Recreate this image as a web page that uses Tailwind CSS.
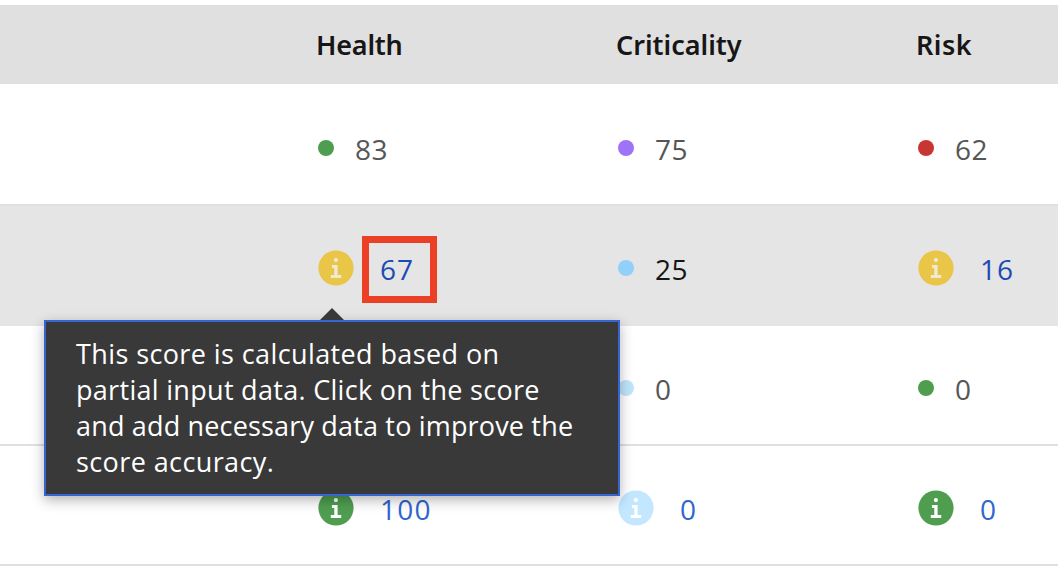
<!DOCTYPE html>
<html lang="en">
<head>
<meta charset="utf-8">
<title>Asset scores</title>
<script src="https://cdn.jsdelivr.net/npm/@tailwindcss/browser@4"></script>
</head>
<body class="w-[1058px] h-[576px] overflow-hidden bg-white relative pt-[5px] text-[28px] leading-none text-[#565656] font-['Open_Sans',sans-serif]">
<svg class="hidden">
<symbol id="info" viewBox="0 0 36 36"><circle cx="18" cy="18" r="17.6" fill="currentColor"/><g class="fill-(--mark)"><circle cx="17.9" cy="10.1" r="2.1"/><path d="M13.9 15.1h5.7v9.8h3.6v3.1H12.8v-3.1H16.3v-6.8h-2.4z"/></g></symbol>
</svg>
<div class="grid grid-cols-[300px_300px_158px] pl-[300px] h-[79px] bg-[#e0e0e0] items-center text-[#161616] font-['Noto_Sans',sans-serif] font-semibold text-[27px]">
<div class="pl-4 tracking-[-0.2px]">Health</div><div class="pl-4">Criticality</div><div class="pl-4 tracking-[0.5px]">Risk</div>
</div>
<div class="grid grid-cols-[300px_300px_158px] pl-[300px] h-[122px] pt-2 border-b-2 border-[#e0e0e0] items-center tracking-[0.6px]">
<div class="flex items-center pl-[18px] gap-[21px]"><i class="size-4 rounded-full bg-[#4f9e50]"></i><span class="pt-px">83</span></div>
<div class="flex items-center pl-[18px] gap-[21px]"><i class="size-4 rounded-full bg-[#9f73f8]"></i><span class="pt-px">75</span></div>
<div class="flex items-center pl-[18px] gap-[21px]"><i class="size-4 rounded-full bg-[#c93532]"></i><span class="pt-px">62</span></div>
</div>
<div class="grid grid-cols-[300px_300px_158px] pl-[300px] h-[120px] pt-1.5 border-b-2 border-[#e5e5e5] bg-[#e5e5e5] items-center tracking-[0.6px] [--mark:#f1ead2]">
<div class="flex items-center pl-[18px] gap-[26px] text-[#1d4bb5]"><svg class="size-9 text-[#e9c548]"><use href="#info"/></svg><span class="pt-px tracking-[1px]">67</span></div>
<div class="flex items-center pl-[18px] gap-[21px] text-[#161616]"><i class="size-4 rounded-full bg-[#92cffa]"></i><span class="pt-px">25</span></div>
<div class="flex items-center pl-[18px] gap-[26px] text-[#1d4bb5]"><svg class="size-9 text-[#e9c548]"><use href="#info"/></svg><span class="pt-px tracking-[1px]">16</span></div>
</div>
<div class="grid grid-cols-[300px_158px] pl-[600px] h-[120px] pt-1.5 border-b-2 border-[#e0e0e0] items-center">
<div class="flex items-center pl-[18px] gap-[21px]"><i class="size-4 rounded-full bg-[#bfe5fb]"></i><span class="pt-px">0</span></div>
<div class="flex items-center pl-[18px] gap-[21px]"><i class="size-4 rounded-full bg-[#4f9e50]"></i><span class="pt-px">0</span></div>
</div>
<div class="grid grid-cols-[300px_300px_158px] pl-[300px] h-[120px] pt-1.5 border-b-2 border-[#e0e0e0] items-center text-[#2f66d0] [--mark:#ffffff]">
<div class="flex items-center pl-[18px] gap-[26px]"><svg class="size-9 text-[#4f9e50]"><use href="#info"/></svg><span class="pt-px tracking-[1.2px]">100</span></div>
<div class="flex items-center pl-[18px] gap-[26px]"><svg class="size-9 text-[#c2e7ff]"><use href="#info"/></svg><span class="pt-px">0</span></div>
<div class="flex items-center pl-[18px] gap-[26px]"><svg class="size-9 text-[#4f9e50]"><use href="#info"/></svg><span class="pt-px">0</span></div>
</div>
<div class="absolute left-[362px] top-[236px] w-[75px] h-[67px] border-7 border-[#eb4026]"></div>
<div class="absolute left-[44px] top-[320px] w-[576px] h-[176px] border-2 border-[#3665cf] bg-[#393939] text-white text-[27px] pl-[30px] pt-[14px] leading-9 whitespace-nowrap shadow-[0_4px_12px_rgba(0,0,0,0.3)]">
<svg class="absolute left-[274px] -top-[14px] w-6 h-3" viewBox="0 0 24 12"><path d="M12 0l12 12H0z" fill="#393939"/></svg>
<div class="tracking-[0.4px]">This score is calculated based on</div>
<div class="tracking-[0.3px]">partial input data. Click on the score</div>
<div class="tracking-[0.17px]">and add necessary data to improve the</div>
<div class="tracking-[0.4px]">score accuracy.</div>
</div>
</body>
</html>
